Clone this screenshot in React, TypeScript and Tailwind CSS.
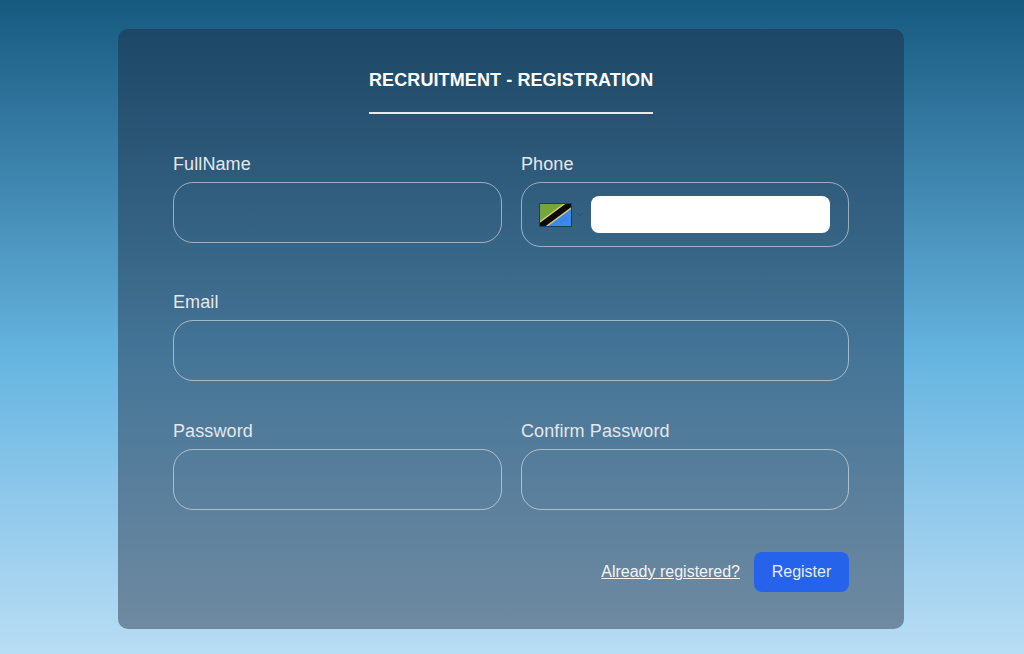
export default function App() {
  const label = "block text-[18px] leading-[20px] tracking-[0.1px] mb-[8px] text-[#e5e7eb]";
  const input = "block w-full h-[61px] rounded-[20px] border border-[#ffffff80] bg-transparent outline-none";
  return (
    <div className="h-[654px] overflow-hidden bg-gradient-to-b from-[#175a80] via-[#66b5e1] via-[55%] to-[#b9ddf4] pt-[29px] font-['Liberation_Sans',Arial,sans-serif]">
      <form className="w-[786px] h-[600px] ml-[118px] pl-[55px] pr-[55px] pt-[40px] rounded-[10px] bg-slate-800/45">
        <div className="flex justify-center">
          <h1 className="w-[284px] pb-[21px] border-b-2 border-[#e5e7eb] text-[18px] leading-[22px] font-bold tracking-[0.1px] text-white whitespace-nowrap">
            RECRUITMENT - REGISTRATION
          </h1>
        </div>
        <div className="grid grid-cols-[329px_328px] gap-x-[19px] mt-[40px]">
          <div>
            <label className={label}>FullName</label>
            <input className={input} />
          </div>
          <div>
            <label className={label}>Phone</label>
            <div className="flex items-center h-[65px] rounded-[20px] border border-[#ffffff80] pl-[17px] pr-[18px]">
              <svg width="33" height="24" viewBox="0 0 33 24" className="shrink-0">
                <rect x="0.5" y="0.5" width="32" height="23" fill="#75a63c" />
                <path d="M32.5 1V23.5H3Z" fill="#3b88ee" />
                <path d="M1 23.5 32 0.5" stroke="#dcc96e" strokeWidth="9" />
                <path d="M1 23.5 32 0.5" stroke="#0a0a0a" strokeWidth="6" />
                <circle cx="22" cy="19" r="0.5" fill="#1d5fc0" />
                <circle cx="25" cy="17" r="0.5" fill="#1d5fc0" />
                <circle cx="27" cy="15" r="0.5" fill="#1d5fc0" />
                <rect x="0.5" y="0.5" width="32" height="23" fill="none" stroke="#17405c" />
              </svg>
              <svg width="8" height="5" viewBox="0 0 8 5" className="shrink-0 ml-[4px] opacity-30">
                <path d="M1 1 4 4 7 1" fill="none" stroke="#1f2937" strokeWidth="1" />
              </svg>
              <input className="ml-[7px] h-[37px] flex-1 min-w-0 rounded-[8px] bg-white outline-none" />
            </div>
          </div>
        </div>
        <div className="mt-[45px]">
          <label className={label}>Email</label>
          <input className={input} />
        </div>
        <div className="grid grid-cols-[329px_328px] gap-x-[19px] mt-[40px]">
          <div>
            <label className={label}>Password</label>
            <input className={input} />
          </div>
          <div>
            <label className={label}>Confirm Password</label>
            <input className={input} />
          </div>
        </div>
        <div className="flex items-center justify-end gap-[14px] mt-[42px]">
          <a className="text-[16px] text-[#f3f4f6] underline">Already registered?</a>
          <button type="button" className="w-[95px] h-[40px] rounded-[8px] bg-[#2563eb] text-[16px] text-[#e5eefc]">Register</button>
        </div>
      </form>
    </div>
  );
}
